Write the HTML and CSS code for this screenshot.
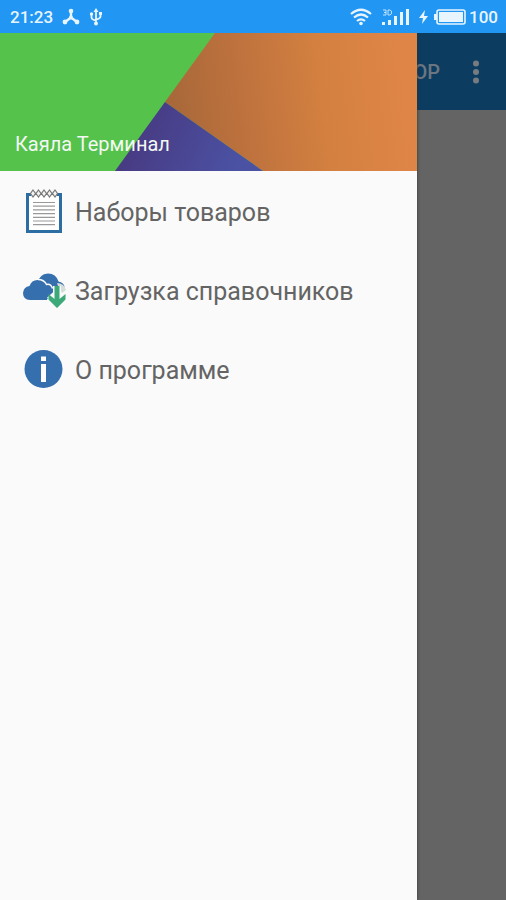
FILE: index.html
```html
<!DOCTYPE html>
<html lang="ru">
<head>
<meta charset="utf-8">
<meta name="viewport" content="width=device-width, initial-scale=1">
<title>Каяла Терминал</title>
<link rel="stylesheet" href="styles.css">
</head>
<body>
<div class="status">
  <span class="clock">21:23</span>
  <svg class="hub" width="18" height="18" viewBox="0 0 18 18" aria-hidden="true"><path d="M9 3v7M9 9.500l-6 4.500M9 9.500l6 4.500" fill="none" stroke="currentColor" stroke-width="2.400"/><g fill="currentColor"><circle cx="9" cy="3" r="2.300"/><circle cx="9" cy="9.500" r="2"/><circle cx="3" cy="14" r="2.400"/><circle cx="15" cy="14" r="2.400"/></g></svg>
  <svg class="usb" width="14" height="18" viewBox="0 0 14 18" aria-hidden="true"><path d="M7 2v14M2.500 6v3.500q0 2 4.500 3M11.500 5v3.500q0 2-4.500 3" fill="none" stroke="currentColor" stroke-width="1.800"/><g fill="currentColor"><path d="M7 0l2.500 4h-5zM10 4h3v3h-3z"/><circle cx="2.500" cy="6" r="1.700"/><circle cx="7" cy="15.500" r="2"/></g></svg>
  <span class="spacer"></span>
  <svg class="wifi" width="22" height="18" viewBox="0 0 22 18" aria-hidden="true"><g fill="none" stroke="currentColor" stroke-width="2.200"><path d="M1 6q10-8.500 20 0"/><path d="M4 9.500q7-6 14 0"/><path d="M7 13q4-3.400 8 0"/></g><circle cx="11" cy="15.500" r="1.800" fill="currentColor"/></svg>
  <svg class="signal" width="27" height="18" viewBox="0 0 27 18" aria-hidden="true"><path d="M0 14h3v3H0zM6 12h3v5H6zM12 8h3v9h-3zM18 4h3v13h-3zM24 1h3v16h-3z" fill="currentColor"/><path d="M1 2h3v5H1M2 4.500h2M6 2h2l1.500 1.200v2.600L8 7H6z" fill="none" stroke="currentColor" stroke-width="1" opacity=".8"/></svg>
  <svg class="bolt" width="9" height="14" viewBox="0 0 9 14" aria-hidden="true"><path d="M6 0L0 8h4L3 14l6-8H5z" fill="currentColor"/></svg>
  <svg class="battery" width="32" height="18" viewBox="0 0 32 18" aria-hidden="true"><rect x="3" y="2" width="28" height="14" rx="2" fill="none" stroke="currentColor" stroke-width="1.600"/><path d="M5 4h24v10H5zM0 6h3v6H0z" fill="currentColor"/></svg>
  <span>100</span>
</div>
<div class="screen">
  <main class="page">
    <header class="appbar">
      <span>ОР</span>
      <button class="more" aria-label="Меню"><svg width="8" height="24" viewBox="0 0 8 24"><g fill="currentColor"><circle cx="4" cy="3.500" r="3"/><circle cx="4" cy="12" r="3"/><circle cx="4" cy="20.500" r="3"/></g></svg></button>
    </header>
  </main>
  <aside class="drawer">
    <div class="banner">
      <svg class="art" viewBox="0 0 417 138" preserveAspectRatio="none" aria-hidden="true">
        <defs>
          <linearGradient id="orange" gradientUnits="userSpaceOnUse" x1="165" y1="80" x2="405" y2="50"><stop offset="0" stop-color="#a66739"/><stop offset=".35" stop-color="#c0733e"/><stop offset=".65" stop-color="#d38040"/><stop offset="1" stop-color="#df8548"/></linearGradient>
          <linearGradient id="violet" gradientUnits="userSpaceOnUse" x1="140" y1="95" x2="235" y2="138"><stop offset="0" stop-color="#483b84"/><stop offset="1" stop-color="#4b52a3"/></linearGradient>
        </defs>
        <path d="M0 0h417v138H0z" fill="#54c24b"/>
        <path d="M215 0h202v138H263L165 69z" fill="url(#orange)"/>
        <path d="M165 69l98 69H115z" fill="url(#violet)"/>
      </svg>
      <span class="name">Каяла Терминал</span>
    </div>
    <nav class="menu">
      <a href="#sets">
        <svg viewBox="0 0 44 44" aria-hidden="true"><path d="M4.500 3.500h33v37h-33z" fill="#fff" stroke="#2c6da4" stroke-width="3"/><path d="M10 11.500h22M10 15.200h22M10 18.900h22M10 22.600h22M10 26.300h22M10 30h22M10 33.700h22" stroke="#999" stroke-width="1.200"/><path d="M8 0h26v5H8z" fill="#f4f4f4"/><g fill="#f4f4f4" stroke="#777" stroke-width="1.200"><path d="M10 -1l2.500 3.500L10 6 7.500 2.500zM15.500 -1l2.500 3.500L15.500 6 13 2.500zM21 -1l2.500 3.500L21 6l-2.500-3.500zM26.500 -1L29 2.500 26.500 6 24 2.500zM32 -1l2.500 3.500L32 6l-2.500-3.500z"/></g></svg>
        Наборы товаров
      </a>
      <a href="#load">
        <svg viewBox="0 0 44 44" aria-hidden="true"><path d="M14 14q2-10 11-10.500 8 0 10.500 8 5 1 6 5L33 29H22z" fill="#356fae"/><path d="M34 13q7 0 9 7l-4 3-4-7z" fill="#d5dedb"/><path d="M7 30q-7-.5-7-7 .5-6 6.500-7 2-6 8-6 6 0 8.500 5 4.500-1 6 3-5 1-5 5v7z" fill="#356fae"/><path d="M15 9.500q6 0 8.500 5 4.500-1 6 4" fill="none" stroke="#fafafa" stroke-width="1.500"/><path d="M34 16v14M27 25l7 8 7-8" fill="none" stroke="#fafafa" stroke-width="8"/><path d="M31.500 16h5v13l6-5v5.500L34 38l-8.500-8.500V24l6 5z" fill="#3baa78"/></svg>
        Загрузка справочников
      </a>
      <a href="#about">
        <svg viewBox="0 0 44 44" aria-hidden="true"><circle cx="20.500" cy="20" r="19" fill="#356fae"/><path d="M18 7.500h5v4.500h-5zM18 15h5v18h-5z" fill="#fff"/></svg>
        О программе
      </a>
    </nav>
  </aside>
</div>
</body>
</html>
```
FILE: styles.css
```css
* { box-sizing: border-box; }
body {
  margin: 0;
  min-height: 100vh;
  display: flex;
  flex-direction: column;
  font-family: Roboto, "Liberation Sans", sans-serif;
  background: #646464;
}
.status {
  display: flex;
  align-items: center;
  height: 33px;
  padding: 0 8px 0 10px;
  background: #2196f3;
  color: #e8f5ff;
  font-size: 17px;
  font-weight: 500;
}
.hub { margin-left: 9px; }
.usb { margin-left: 9px; }
.spacer { flex: 1; }
.signal { margin-left: 10px; }
.bolt { margin-left: 10px; }
.battery { margin: 0 3px 0 6px; }
.screen {
  flex: 1;
  display: grid;
  overflow: hidden;
}
.page, .drawer { grid-area: 1 / 1; }
.appbar {
  display: flex;
  align-items: center;
  justify-content: flex-end;
  gap: 24px;
  height: 77px;
  padding-right: 18px;
  background: #0d3c61;
  color: #6b7680;
  font-size: 20px;
  font-weight: 500;
}
.more {
  display: flex;
  justify-content: center;
  width: 24px;
  padding: 0;
  border: 0;
  background: none;
  color: #777c80;
}
.drawer {
  z-index: 1;
  width: 82.4%;
  background: #fafafa;
  box-shadow: 0 0 3px #333;
}
.banner {
  display: grid;
  height: 138px;
}
.art, .name { grid-area: 1 / 1; }
.art {
  width: 100%;
  height: 138px;
}
.name {
  align-self: end;
  z-index: 1;
  padding: 0 15px 15px;
  color: #f4f8f4;
  font-size: 20px;
  line-height: 24px;
}
.menu {
  display: flex;
  flex-direction: column;
  padding-top: 2px;
}
.menu a {
  display: flex;
  align-items: center;
  height: 79px;
  padding-left: 23px;
  color: #646464;
  font-size: 25px;
  text-decoration: none;
}
.menu svg {
  flex: none;
  width: 44px;
  height: 44px;
  margin-right: 8px;
  overflow: visible;
}
```
